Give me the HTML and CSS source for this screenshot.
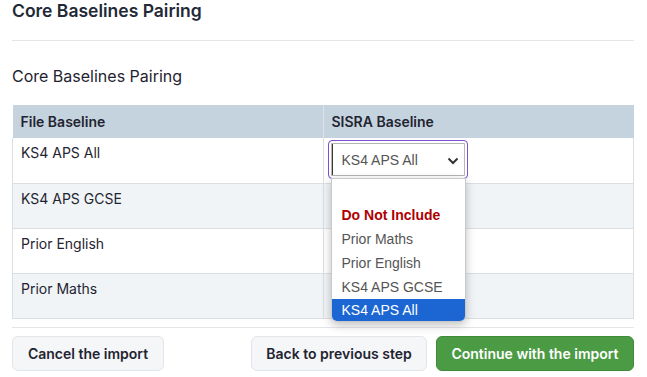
FILE: index.html
```html
<!DOCTYPE html>
<html lang="en">
<head>
<meta charset="UTF-8" />
<title>Core Baselines Pairing</title>
<link rel="stylesheet" href="styles.css">
</head>
<body>
  <div class="page">
    <h2 class="title">Core Baselines Pairing</h2>
    <div class="rule"></div>
    <h3 class="subtitle">Core Baselines Pairing</h3>

    <table class="pairing">
      <thead>
        <tr><th>File Baseline</th><th>SISRA Baseline</th></tr>
      </thead>
      <tbody>
        <tr>
          <td>KS4 APS All</td>
          <td>
            <div class="select-wrap">
              <div class="select">
                <span>KS4 APS All</span>
                <svg class="chev" width="12" height="8" viewBox="0 0 12 8"><path d="M1.5 1.5 L6 6 L10.5 1.5" fill="none" stroke="#333" stroke-width="2"/></svg>
              </div>
              <!-- open native dropdown -->
              <ul class="options">
                <li class="blank">&nbsp;</li>
                <li class="exclude">Do Not Include</li>
                <li>Prior Maths</li>
                <li>Prior English</li>
                <li>KS4 APS GCSE</li>
                <li class="selected">KS4 APS All</li>
              </ul>
            </div>
          </td>
        </tr>
        <tr><td>KS4 APS GCSE</td><td></td></tr>
        <tr><td>Prior English</td><td></td></tr>
        <tr><td>Prior Maths</td><td></td></tr>
      </tbody>
    </table>

    <div class="rule bottom"></div>

    <div class="actions">
      <button class="btn">Cancel the import</button>
      <div class="right">
        <button class="btn back">Back to previous step</button>
        <button class="btn primary">Continue with the import</button>
      </div>
    </div>
  </div>
</body>
</html>
```

FILE: styles.css
```css
html, body {
  margin: 0;
  padding: 0;
  background: #fff;
  font-family: Inter, 'Noto Sans', sans-serif;
  color: #1f2430;
}
.page {
  padding: 0 13px 0 12px;
}
.title {
  margin: 0;
  font-size: 17.5px;
  font-weight: 600;
  line-height: 22px;
  color: #1f2937;
}
.rule {
  border-top: 1px solid #e3e5e8;
  margin-top: 18px;
}
.subtitle {
  margin: 25px 0 0;
  font-size: 16px;
  font-weight: 400;
  line-height: 20px;
  color: #1f2430;
}
.pairing {
  margin-top: 19px;
  width: 100%;
  border-collapse: collapse;
  font-size: 14px;
}
.pairing th {
  background: #c5d3de;
  text-align: left;
  font-weight: 600;
  height: 33px;
  padding: 0 8px;
  box-sizing: border-box;
}
.pairing th + th {
  border-left: 1px solid #dde3e8;
}
.pairing td {
  height: 45px;
  box-sizing: border-box;
  vertical-align: top;
  padding: 6px 8px 0;
  border: 1px solid #dcdfe2;
  border-top: none;
  width: 50%;
}
.pairing tbody tr:nth-child(even) td {
  background: #f0f4f7;
}
.pairing tbody tr:first-child td:last-child {
  padding: 2px 5px 0 4px;
}
.select-wrap {
  position: relative;
  width: 140px;
}
.select {
  display: flex;
  align-items: center;
  justify-content: space-between;
  height: 39px;
  box-sizing: border-box;
  border: 1px solid #7e4fd2;
  border-radius: 4px;
  padding: 0 8px 0 13px;
  box-shadow: inset 0 0 0 2px #fff, inset 0 0 0 3px #b5b5b5, inset 5px 0 0 -1px #3a3a3a;
  font-family: 'Liberation Sans', Arial, sans-serif;
  font-size: 14px;
  color: #555;
  background: #fff;
}
.chev {
  margin-top: 2px;
}
.options {
  position: absolute;
  top: 38px;
  left: 3px;
  width: 133px;
  margin: 0;
  padding: 0;
  list-style: none;
  background: #fff;
  border: 1px solid #c9c9c9;
  border-radius: 0 0 6px 6px;
  box-shadow: 0 3px 10px rgba(0,0,0,0.25);
  overflow: hidden;
  font-family: 'Liberation Sans', Arial, sans-serif;
  font-size: 14px;
  color: #555;
  z-index: 2;
}
.options li {
  height: 24px;
  line-height: 24px;
  padding: 0 10px;
}
.options .exclude {
  color: #b00000;
  font-weight: 700;
}
.options .selected {
  background: #1b66d2;
  color: #fff;
  height: 22px;
  line-height: 22px;
}
.rule.bottom {
  margin-top: 8px;
}
.actions {
  display: flex;
  justify-content: space-between;
  margin-top: 8px;
}
.right {
  display: flex;
  gap: 9px;
}
.btn {
  height: 35px;
  padding: 0;
  border: 1px solid #e2e5e9;
  border-radius: 6px;
  background: #f4f6f8;
  font-family: Inter, 'Noto Sans', sans-serif;
  font-size: 14px;
  font-weight: 600;
  color: #1f2430;
  white-space: nowrap;
}
.btn:first-child {
  width: 152px;
}
.btn.back {
  width: 176px;
}
.btn.primary {
  width: 198px;
  background: #4b9a44;
  border-color: #3f8a39;
  color: #fff;
}
```
